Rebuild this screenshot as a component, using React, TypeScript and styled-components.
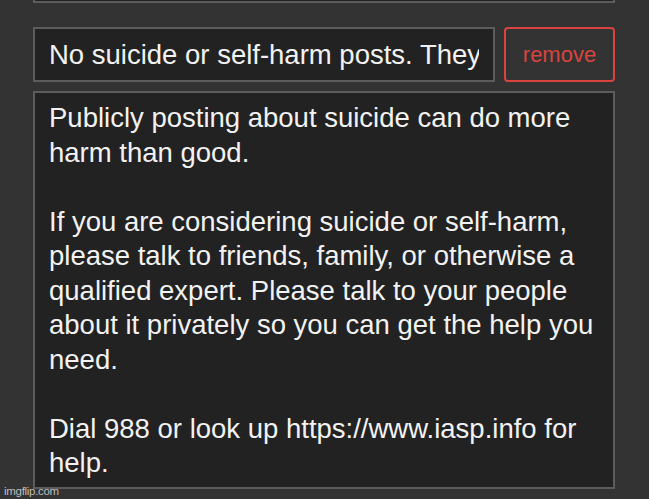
import React from "react";
import styled, { createGlobalStyle } from "styled-components";

const GlobalStyle = createGlobalStyle`
  html, body {
    margin: 0;
    padding: 0;
    background: #333333;
    overflow: hidden;
  }
  body {
    font-family: "Liberation Sans", Arial, sans-serif;
  }
`;

const Page = styled.div`
  position: relative;
  width: 649px;
  height: 499px;
  padding: 0 34px 0 33px;
  box-sizing: border-box;
  display: flex;
  flex-direction: column;
`;

const PrevBox = styled.div`
  height: 23px;
  margin-top: -20px;
  background: #222222;
  border: 2px solid #5c5c5c;
  box-sizing: border-box;
`;

const Row = styled.div`
  display: flex;
  gap: 9px;
  margin-top: 24px;
  height: 55px;
`;

const RuleInput = styled.input`
  flex: 1;
  min-width: 0;
  height: 100%;
  box-sizing: border-box;
  background: #222222;
  border: 2px solid #5c5c5c;
  border-radius: 0;
  color: #f2f2f2;
  font-family: "Liberation Sans", Arial, sans-serif;
  font-size: 27.5px;
  padding: 0 14px;
  outline: none;
`;

const RemoveButton = styled.button`
  width: 111px;
  height: 100%;
  box-sizing: border-box;
  background: transparent;
  border: 2px solid #d9443f;
  border-radius: 4px;
  color: #d9443f;
  font-family: "Liberation Sans", Arial, sans-serif;
  font-size: 22px;
  padding: 0;
`;

const Details = styled.div`
  margin-top: 9px;
  height: 398px;
  box-sizing: border-box;
  background: #222222;
  border: 2px solid #5c5c5c;
  color: #f2f2f2;
  font-size: 27.5px;
  line-height: 34.5px;
  padding: 8px 10px 0 14px;
  white-space: pre-wrap;
  overflow: hidden;
`;

const Watermark = styled.div`
  position: absolute;
  left: 4px;
  bottom: 2px;
  font-size: 11.5px;
  color: #bdbdbd;
  letter-spacing: -0.3px;
`;

const detailsText = `Publicly posting about suicide can do more harm than good.

If you are considering suicide or self-harm, please talk to friends, family, or otherwise a qualified expert. Please talk to your people about it privately so you can get the help you need.

Dial 988 or look up https://www.iasp.info for help.`;

export default function App() {
  return (
    <>
      <GlobalStyle />
      <Page>
        <PrevBox />
        <Row>
          <RuleInput
            readOnly
            value="No suicide or self-harm posts. They will be removed."
          />
          <RemoveButton>remove</RemoveButton>
        </Row>
        <Details>{detailsText}</Details>
        <Watermark>imgflip.com</Watermark>
      </Page>
    </>
  );
}
